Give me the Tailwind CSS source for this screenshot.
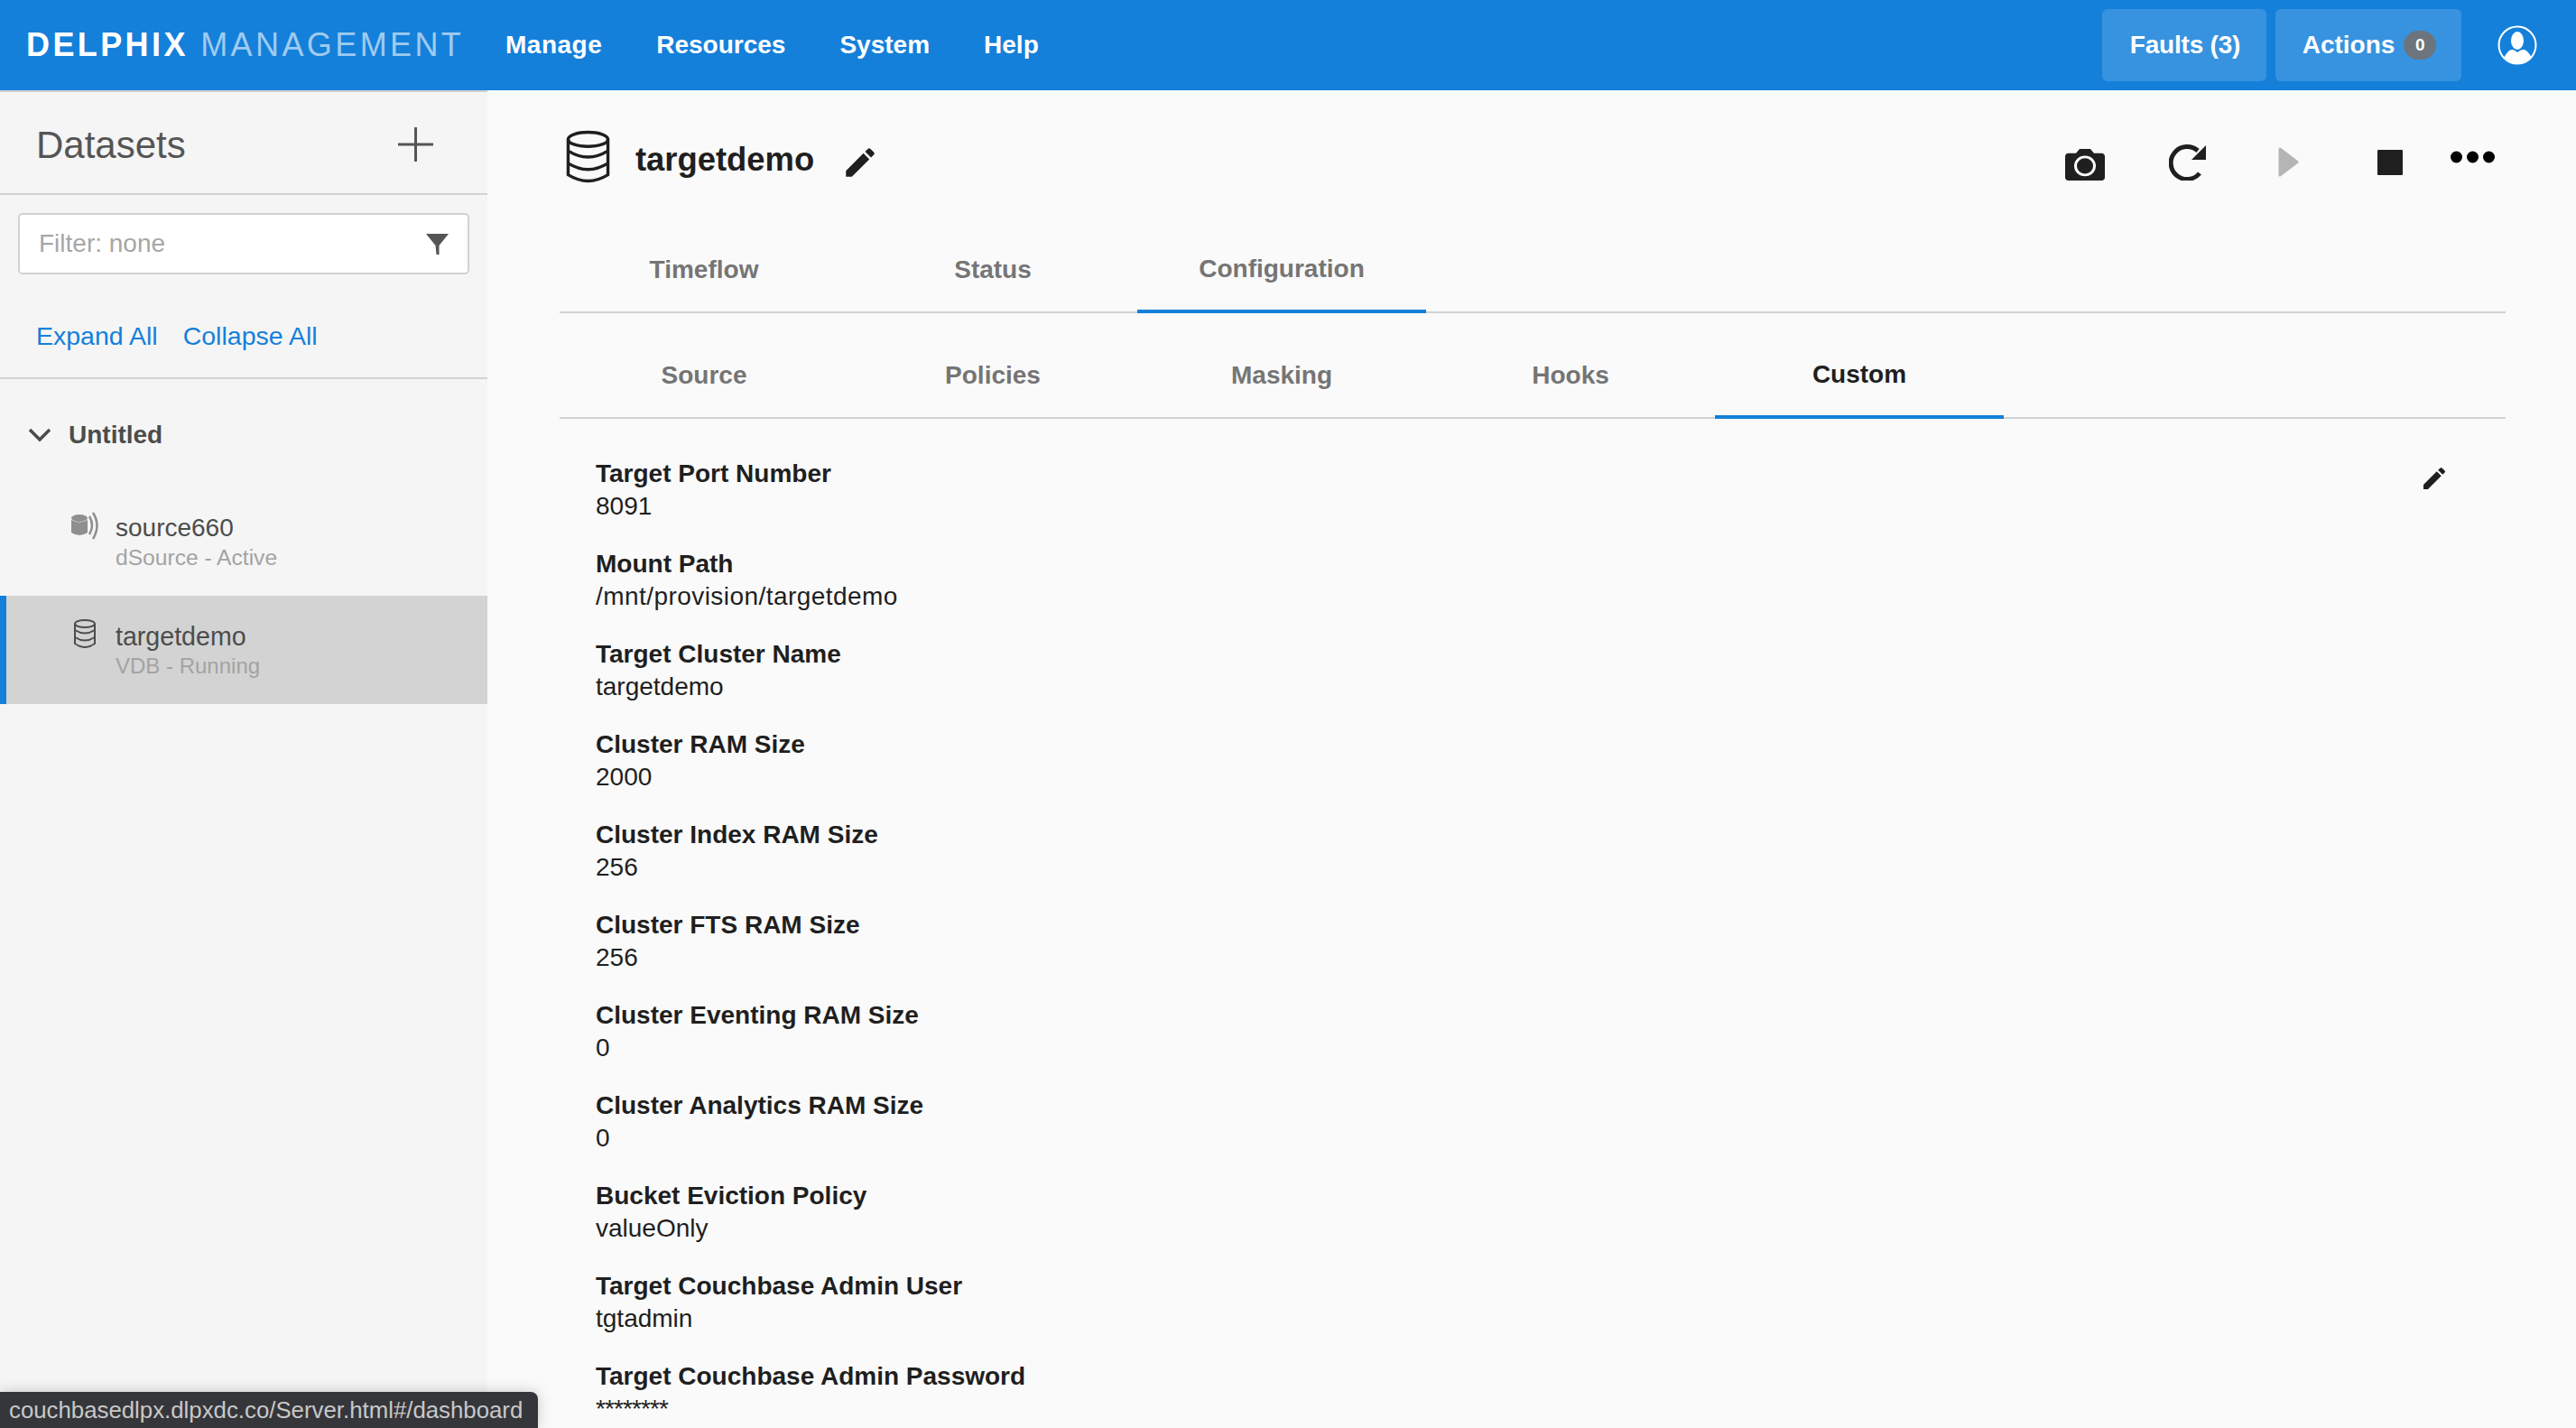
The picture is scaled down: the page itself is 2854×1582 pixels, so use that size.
<!DOCTYPE html>
<html><head><meta charset="utf-8">
<script src="https://cdn.jsdelivr.net/npm/@tailwindcss/browser@4"></script>
</head>
<body class="w-[2854px] h-[1582px] overflow-hidden bg-[#fafafa] font-['Liberation_Sans',Arial,sans-serif] relative">
<header class="h-[100px] bg-[#1480da] flex items-center text-white">
  <div class="w-[560px] pl-[29px] text-[36px] leading-none tracking-[3.4px] whitespace-nowrap"><span class="font-bold">DELPHIX</span> <span class="font-normal text-white/60">MANAGEMENT</span></div>
  <nav class="flex gap-[60px] text-[28px] font-bold"><span class="tracking-[0.5px]">Manage</span><span>Resources</span><span>System</span><span>Help</span></nav>
  <div class="ml-auto flex items-center gap-[10px] text-[28px] font-bold">
    <div class="w-[182px] h-[80px] rounded-[6px] bg-white/15 flex items-center justify-center tracking-[-0.2px] pl-[2px]">Faults (3)</div>
    <div class="w-[206px] h-[80px] rounded-[6px] bg-white/15 flex items-center justify-center gap-[10px] pl-[2px]">Actions <span class="w-[36px] h-[32px] rounded-full bg-[#6c757d] text-[19px] flex items-center justify-center">0</span></div>
    <svg class="ml-[30px] mr-[43px]" width="44" height="44" viewBox="0 0 44 44"><circle cx="22" cy="22" r="20.5" fill="none" stroke="#fff" stroke-width="2"/><ellipse cx="22" cy="17" rx="7" ry="10" fill="#fff"/><path d="M7 36 Q12 27 16 27 Q19 27 22 30 Q25 27 29 27 Q33 27 38 36 A21 21 0 0 1 7 36Z" fill="#fff"/></svg>
  </div>
</header>
<div class="flex h-[1482px]">
  <aside class="w-[540px] shrink-0 bg-[#f5f5f5] border-t-2 border-[#d2d2d2]">
    <div class="h-[114px] flex items-center justify-between pl-[40px] pr-[60px] pt-[4px] border-b-2 border-[#d2d2d2]">
      <span class="text-[42px] text-[#555]">Datasets</span>
      <svg width="39" height="38" viewBox="0 0 39 38"><path d="M19.5 0V38M0 19H39" stroke="#555" stroke-width="3"/></svg>
    </div>
    <div class="pl-[20px] pr-[20px] pt-[20px]">
      <div class="h-[68px] bg-white border-2 border-[#cfd2d6] rounded-[5px] flex items-center justify-between pl-[21px] pr-[21px]">
        <span class="text-[28px] text-[#a6a6a6]">Filter: none</span>
        <svg width="25" height="23" viewBox="0 0 25 23"><path d="M0 0H25L14.5 13V23H11.5L10.5 13Z" fill="#555"/></svg>
      </div>
    </div>
    <div class="pl-[40px] pt-[50px] h-[116px] flex gap-[28px] text-[28.5px] leading-[36px] text-[#1480da] border-b-2 border-[#d2d2d2]"><span>Expand All</span><span>Collapse All</span></div>
    <div class="h-[120px] flex items-center pl-[32px] gap-[20px] text-[28px] font-bold text-[#4c4c4c] pt-[4px]">
      <svg width="24" height="16" viewBox="0 0 24 16"><path d="M1 2L12 13L23 2" fill="none" stroke="#4c4c4c" stroke-width="3.5"/></svg>
      <span>Untitled</span>
    </div>
    <div class="h-[120px] flex pl-[78px] gap-[18px]">
      <svg class="mt-[27px]" width="32" height="32" viewBox="0 0 32 32"><ellipse cx="10" cy="7" rx="9" ry="4" fill="#8f8f8f"/><path d="M1 9V23Q10 29 19 23V9Q10 14 1 9Z" fill="#8f8f8f"/><path d="M21 5Q27 15 21 25M25 1Q34 15 25 30" fill="none" stroke="#8f8f8f" stroke-width="2.5"/></svg>
      <div class="pt-[27px]"><div class="text-[28px] leading-[36px] text-[#4c4c4c]">source660</div><div class="text-[24.6px] leading-[30px] text-[#a3a3a3]">dSource - Active</div></div>
    </div>
    <div class="h-[120px] flex pl-[75px] gap-[22px] bg-[#d3d3d3] border-l-[7px] border-[#1480da]">
      <svg class="mt-[26px]" width="24" height="32" viewBox="0 0 24 32"><ellipse cx="12" cy="5" rx="11" ry="4" fill="none" stroke="#4c4c4c" stroke-width="2"/><path d="M1 5V27Q12 35 23 27V5M1 12Q12 19 23 12M1 20Q12 27 23 20" fill="none" stroke="#4c4c4c" stroke-width="2"/></svg>
      <div class="pt-[27px]"><div class="text-[28.6px] leading-[36px] text-[#4c4c4c]">targetdemo</div><div class="text-[24px] leading-[30px] text-[#a3a3a3]">VDB - Running</div></div>
    </div>
  </aside>
  <main class="flex-1 pl-[80px] pr-[78px]">
    <div class="h-[137px] flex items-start">
      <div class="flex items-start flex-1 pl-[7px] pt-[44px]">
        <svg width="49" height="60" viewBox="0 0 50 60"><ellipse cx="25" cy="10" rx="22.5" ry="8" fill="none" stroke="#1f1f1f" stroke-width="3.5"/><path d="M2.5 10V50Q25 64 47.5 50V10M2.5 23Q25 37 47.5 23M2.5 37Q25 51 47.5 37" fill="none" stroke="#1f1f1f" stroke-width="3.5"/></svg>
        <span class="ml-[28px] mt-[12px] text-[36.4px] leading-[42px] font-bold text-[#1f1f1f]">targetdemo</span>
        <svg class="ml-[30px] mt-[15px]" width="42" height="42" viewBox="0 0 24 24"><path d="M3 17.25V21h3.75L17.81 9.94l-3.75-3.75L3 17.25zM20.71 7.04a1 1 0 0 0 0-1.41l-2.34-2.34a1 1 0 0 0-1.41 0l-1.83 1.83 3.75 3.75 1.83-1.83z" fill="#1f1f1f"/></svg>
      </div>
      <div class="flex items-start mr-[12px]">
        <svg class="mt-[64px]" width="44" height="36" viewBox="0 0 44 38" preserveAspectRatio="none"><path d="M4 6H12L16 1H28L32 6H40Q44 6 44 10V34Q44 38 40 38H4Q0 38 0 34V10Q0 6 4 6Z" fill="#1f1f1f"/><circle cx="22" cy="21" r="10.5" fill="none" stroke="#fafafa" stroke-width="3"/></svg>
        <svg class="ml-[71px] mt-[60px]" width="41" height="40" viewBox="0 0 41 40"><path d="M34 32A18 18 0 1 1 32 7" fill="none" stroke="#1f1f1f" stroke-width="5"/><path d="M41 1V17H25Z" fill="#1f1f1f"/></svg>
        <svg class="ml-[80px] mt-[63px]" width="23" height="33" viewBox="0 0 23 33"><path d="M2 2L21 16.5L2 31Z" fill="#b5b5b5" stroke="#b5b5b5" stroke-width="3" stroke-linejoin="round"/></svg>
        <svg class="ml-[87px] mt-[66px]" width="28" height="28" viewBox="0 0 28 28"><rect width="28" height="28" rx="1" fill="#1f1f1f"/></svg>
        <svg class="ml-[53px] mt-[67px]" width="49" height="14" viewBox="0 0 49 14"><circle cx="6.5" cy="7" r="6.5" fill="#000"/><circle cx="24.5" cy="7" r="6.5" fill="#000"/><circle cx="42.5" cy="7" r="6.5" fill="#000"/></svg>
      </div>
    </div>
    <div class="flex h-[110px] border-b-2 border-[#d2d2d2] text-[28px] font-bold text-[#757575]">
      <div class="w-[320px] flex items-center justify-center pt-[16px]">Timeflow</div>
      <div class="w-[320px] flex items-center justify-center pt-[16px]">Status</div>
      <div class="w-[320px] flex items-center justify-center pt-[16px] border-b-4 border-[#1480da] -mb-[2px]">Configuration</div>
    </div>
    <div class="flex h-[117px] border-b-2 border-[#d2d2d2] text-[28px] font-bold text-[#757575]">
      <div class="w-[320px] flex items-center justify-center pt-[22px]">Source</div>
      <div class="w-[320px] flex items-center justify-center pt-[22px]">Policies</div>
      <div class="w-[320px] flex items-center justify-center pt-[22px]">Masking</div>
      <div class="w-[320px] flex items-center justify-center pt-[22px]">Hooks</div>
      <div class="w-[320px] flex items-center justify-center pt-[22px] text-[#1f1f1f] border-b-4 border-[#1480da] -mb-[2px]">Custom</div>
    </div>
    <div class="relative pl-[40px] pt-[43px] text-[28px] leading-[36px] text-[#1f1f1f] flex flex-col gap-[28px]">
      <svg class="absolute right-[63px] top-[50px]" width="32" height="32" viewBox="0 0 24 24"><path d="M3 17.25V21h3.75L17.81 9.94l-3.75-3.75L3 17.25zM20.71 7.04a1 1 0 0 0 0-1.41l-2.34-2.34a1 1 0 0 0-1.41 0l-1.83 1.83 3.75 3.75 1.83-1.83z" fill="#1f1f1f"/></svg>
      <div><div class="font-bold">Target Port Number</div><div>8091</div></div>
      <div><div class="font-bold">Mount Path</div><div class="tracking-[0.44px]">/mnt/provision/targetdemo</div></div>
      <div><div class="font-bold">Target Cluster Name</div><div>targetdemo</div></div>
      <div><div class="font-bold">Cluster RAM Size</div><div>2000</div></div>
      <div><div class="font-bold">Cluster Index RAM Size</div><div>256</div></div>
      <div><div class="font-bold">Cluster FTS RAM Size</div><div>256</div></div>
      <div><div class="font-bold">Cluster Eventing RAM Size</div><div>0</div></div>
      <div><div class="font-bold">Cluster Analytics RAM Size</div><div>0</div></div>
      <div><div class="font-bold">Bucket Eviction Policy</div><div>valueOnly</div></div>
      <div><div class="font-bold">Target Couchbase Admin User</div><div>tgtadmin</div></div>
      <div><div class="font-bold">Target Couchbase Admin Password</div><div class="tracking-[-0.9px]">********</div></div>
    </div>
  </main>
</div>
<div class="absolute left-0 bottom-0 w-[596px] h-[40px] bg-[#35363a] rounded-tr-[8px] pl-[10px] text-[25.8px] leading-[40px] text-[#c8c8c8] whitespace-nowrap shadow-[0_0_16px_rgba(0,0,0,0.2)]">couchbasedlpx.dlpxdc.co/Server.html#/dashboard</div>
</body></html>
